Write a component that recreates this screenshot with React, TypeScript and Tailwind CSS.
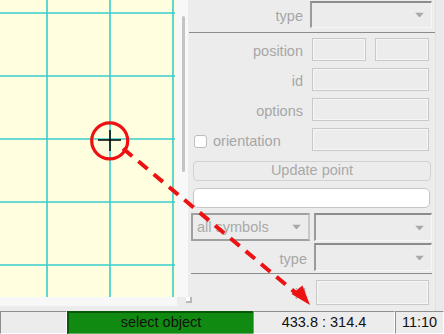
import React from "react";

const font = { fontFamily: '"Liberation Sans", Arial, sans-serif' };

function Arrow() {
  return (
    <svg className="absolute right-[7px] top-1/2 -translate-y-1/2" width="9" height="5" viewBox="0 0 9 5">
      <polygon points="0,0 9,0 4.5,5" fill="#a8a8a8" />
    </svg>
  );
}

function Combo({ w, h, text, ml }: { w: string; h: string; text?: string; ml?: string }) {
  return (
    <div
      className={`relative ${w} ${h} ${ml ?? ""} bg-[#ececec] border-t-2 border-l-2 border-r border-b border-t-[#8c8c8c] border-l-[#9a9a9a] border-r-[#f7f7f7] border-b-[#f7f7f7] flex items-center`}
    >
      {text && <span className="pl-[4px] text-[#a9a9a9]">{text}</span>}
      <Arrow />
    </div>
  );
}

function Field({ w, h = "h-[23px]" }: { w: string; h?: string }) {
  return <div className={`${w} ${h} border border-[#c8c8c8] bg-[#ececec] shadow-[inset_0_0_0_1px_#f6f6f6]`} />;
}

function Label({ children, w = "w-[115px]" }: { children: React.ReactNode; w?: string }) {
  return <div className={`${w} shrink-0 pt-[4px] text-right text-[#a6a6a6] leading-none`}>{children}</div>;
}

function Grid() {
  const xs = [47, 110, 173];
  const ys = [13, 76, 139, 202, 265];
  return (
    <svg width="175" height="297" className="block">
      <rect width="175" height="297" fill="#ffffe0" />
      {xs.map((x) => (
        <line key={"x" + x} x1={x} y1={0} x2={x} y2={297} stroke="#38cccc" strokeWidth="1.6" />
      ))}
      {ys.map((y) => (
        <line key={"y" + y} x1={0} y1={y} x2={175} y2={y} stroke="#38cccc" strokeWidth="1.6" />
      ))}
    </svg>
  );
}

function StatusCell({ className, children }: { className: string; children?: React.ReactNode }) {
  return (
    <div className={`h-full flex items-center justify-center border-t border-l border-t-[#8e8e8e] border-l-[#8e8e8e] border-b border-r border-b-white border-r-white ${className}`}>
      {children}
    </div>
  );
}

export default function App() {
  return (
    <div className="relative w-[444px] h-[334px] overflow-hidden bg-[#ececec] text-[14.5px]" style={font}>
      <div className="flex h-[311px]">
        {/* canvas area */}
        <div className="w-[188px] shrink-0 flex flex-col">
          <div className="flex h-[297px]">
            <Grid />
            <div className="w-[13px] h-[297px] bg-[#f8f8f8] relative">
              <div className="absolute left-[7px] top-[16px] w-[3px] h-[156px] rounded-full bg-[#c4c4c4]" />
            </div>
          </div>
          <div className="relative flex h-[14px]">
            <div className="w-[177px] h-[9px] bg-[#f8f8f8]" />
            <div className="absolute left-[186px] top-[0px] w-[6px] h-[6px] bg-white border-r-2 border-b-2 border-[#b8b8b8]" />
          </div>
        </div>

        {/* right panel */}
        <div className="w-[247px] shrink-0 flex flex-col">
          <div className="flex items-center mt-[1px] h-[27px]">
            <Label>type</Label>
            <Combo w="w-[122px]" h="h-[27px]" ml="ml-[7px]" />
          </div>
          <div className="mt-[4px] ml-[1px] w-[246px] h-px bg-[#8c8c8c]" />
          <div className="flex items-center mt-[5px] h-[23px]">
            <Label>position</Label>
            <div className="ml-[9px] flex gap-[9px]">
              <Field w="w-[54px]" />
              <Field w="w-[54px]" />
            </div>
          </div>
          <div className="flex items-center mt-[7px] h-[23px]">
            <Label>id</Label>
            <div className="ml-[9px]">
              <Field w="w-[117px]" />
            </div>
          </div>
          <div className="flex items-center mt-[7px] h-[23px]">
            <Label>options</Label>
            <div className="ml-[9px]">
              <Field w="w-[117px]" />
            </div>
          </div>
          <div className="flex items-center mt-[7px] h-[23px]">
            <div className="w-[115px] shrink-0 flex items-center pl-[6px] pt-[4px]">
              <div className="w-[13px] h-[13px] rounded-[3px] border border-[#bdbdbd] bg-white" />
              <span className="ml-[6px] text-[#a6a6a6] leading-none">orientation</span>
            </div>
            <div className="ml-[9px]">
              <Field w="w-[117px]" />
            </div>
          </div>
          <div className="mt-[10px] ml-[5px] w-[238px] h-[20px] rounded-[4px] border border-[#d2d2d2] flex items-center justify-center text-[#a9a9a9]">
            Update point
          </div>
          <div className="mt-[7px] ml-[5px] w-[237px] h-[20px] rounded-[5px] border border-[#c6c6c6] bg-white" />
          <div className="flex mt-[5px] ml-[3px] h-[28px]">
            <div className="relative w-[119px] h-[28px] bg-[#ececec] border-2 border-[#a0a0a0] border-r-[#c8c8c8] flex items-center">
              <span className="pl-[4px] pt-[2px] text-[#a9a9a9]">all symbols</span>
              <Arrow />
            </div>
            <Combo w="w-[118px]" h="h-[28px]" ml="ml-[4px]" />
          </div>
          <div className="flex items-center mt-[2px] h-[28px]">
            <Label w="w-[119px]">type</Label>
            <Combo w="w-[118px]" h="h-[28px]" ml="ml-[7px]" />
          </div>
          <div className="mt-[2px] ml-[3px] w-[241px] h-px bg-[#8c8c8c]" />
          <div className="flex items-center mt-[6px] h-[25px]">
            <Label w="w-[118px]">id</Label>
            <div className="ml-[10px]">
              <Field w="w-[113px]" h="h-[25px]" />
            </div>
          </div>
        </div>
        <div className="flex-1 border-l border-[#e0e0e0] bg-[#eaeaea]" />
      </div>

      {/* status bar */}
      <div className="flex h-[23px] text-[#111]">
        <StatusCell className="w-[67px] bg-[#ececec]" />
        <div className="w-[186px] h-full flex items-center justify-center bg-[#118a11] border-t-2 border-l-2 border-t-[#075807] border-l-[#075807] border-b border-b-[#5fae5f]">
          select object
        </div>
        <StatusCell className="w-[142px] bg-[#ececec]">433.8 : 314.4</StatusCell>
        <StatusCell className="flex-1 bg-[#ececec]">11:10</StatusCell>
      </div>

      {/* overlay annotation */}
      <svg className="absolute left-0 top-0 pointer-events-none" width="444" height="334" viewBox="0 0 444 334">
        <line x1="110" y1="130" x2="110" y2="151" stroke="#000" strokeWidth="1.5" />
        <line x1="98" y1="140" x2="121" y2="140" stroke="#000" strokeWidth="1.5" />
        <circle cx="109.7" cy="140.8" r="18" fill="none" stroke="#ee1111" strokeWidth="3.2" />
        <line x1="123" y1="148.5" x2="297" y2="294" stroke="#ee1111" strokeWidth="4" strokeDasharray="12 8" />
        <polygon points="310,305 291.5,294 302.5,285.5" fill="#ee1111" />
      </svg>
    </div>
  );
}
